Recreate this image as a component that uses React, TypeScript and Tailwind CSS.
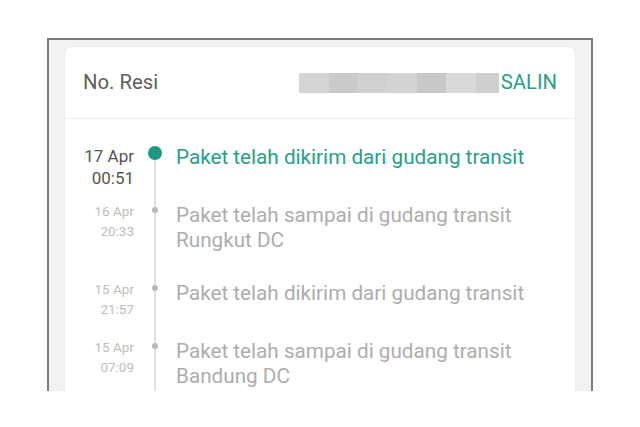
import React from "react";

type Item = { date: string; time: string; lines: string[]; active?: boolean };

const items: Item[] = [
  { date: "17 Apr", time: "00:51", lines: ["Paket telah dikirim dari gudang transit"], active: true },
  { date: "16 Apr", time: "20:33", lines: ["Paket telah sampai di gudang transit", "Rungkut DC"] },
  { date: "15 Apr", time: "21:57", lines: ["Paket telah dikirim dari gudang transit"] },
  { date: "15 Apr", time: "07:09", lines: ["Paket telah sampai di gudang transit", "Bandung DC"] },
];

const blocks = [
  { w: 30, c: "#d5d5d5" },
  { w: 28, c: "#cacaca" },
  { w: 29, c: "#d0d0d0" },
  { w: 31, c: "#d3d3d3" },
  { w: 29, c: "#c8c8c8" },
  { w: 30, c: "#d9d9d9" },
  { w: 23, c: "#cfcfcf" },
];

export default function App() {
  return (
    <div className="w-[640px] h-[427px] bg-white overflow-hidden" style={{ fontFamily: "Roboto, 'Liberation Sans', sans-serif" }}>
      <div className="ml-[47px] mt-[38px] w-[546px] h-[353px] border-2 border-b-0 border-[#7b7b7b] bg-[#f2f2f2] overflow-hidden px-[16px] pt-[7px]">
        <div className="bg-white rounded-[7px] shadow-[0_0_2px_rgba(0,0,0,0.08)] h-[400px]">
          <div className="h-[72px] flex items-center justify-between px-[18px] border-b border-[#eeeeee]">
            <span className="text-[20.3px] text-[#5e5e5e]">No. Resi</span>
            <div className="flex items-center">
              <div className="flex h-[20px] mr-[2px]">
                {blocks.map((b, i) => (
                  <div key={i} className="h-full" style={{ width: b.w, background: b.c }} />
                ))}
              </div>
              <span className="text-[20.3px] text-[#26a08c]">SALIN</span>
            </div>
          </div>
          <div className="pt-[26px] pl-[18px]">
            {items.map((it, i) => (
              <div key={i} className="flex pb-[28px] relative">
                <div className="w-[51px] h-[30px] text-right shrink-0 overflow-visible">
                  {it.active ? (
                    <div className="text-[17px] leading-[22px] text-[#555555]">
                      <div>{it.date}</div>
                      <div>{it.time}</div>
                    </div>
                  ) : (
                    <div className="text-[13.5px] leading-[20px] text-[#bdbdbd] -mt-[2px]">
                      <div>{it.date}</div>
                      <div>{it.time}</div>
                    </div>
                  )}
                </div>
                <div className="w-[42px] shrink-0 relative">
                  <div
                    className={
                      "absolute left-[20px] w-[2px] bg-[#e0e0e0] bottom-[-28px] " +
                      (it.active ? "top-[8px]" : "top-0")
                    }
                  />
                  {it.active ? (
                    <div className="absolute left-[14px] top-[1px] w-[14px] h-[14px] rounded-full bg-[#1b9a83]" />
                  ) : (
                    <div className="absolute left-[18px] top-[4px] w-[6px] h-[6px] rounded-full bg-[#b8b8b8]" />
                  )}
                </div>
                <div
                  className={
                    "min-h-[30px] text-[20.7px] leading-[25px] " +
                    (it.active ? "text-[#26a08c]" : "text-[#adadad]")
                  }
                >
                  {it.lines.map((l, j) => (
                    <div key={j}>{l}</div>
                  ))}
                </div>
              </div>
            ))}
          </div>
        </div>
      </div>
    </div>
  );
}
